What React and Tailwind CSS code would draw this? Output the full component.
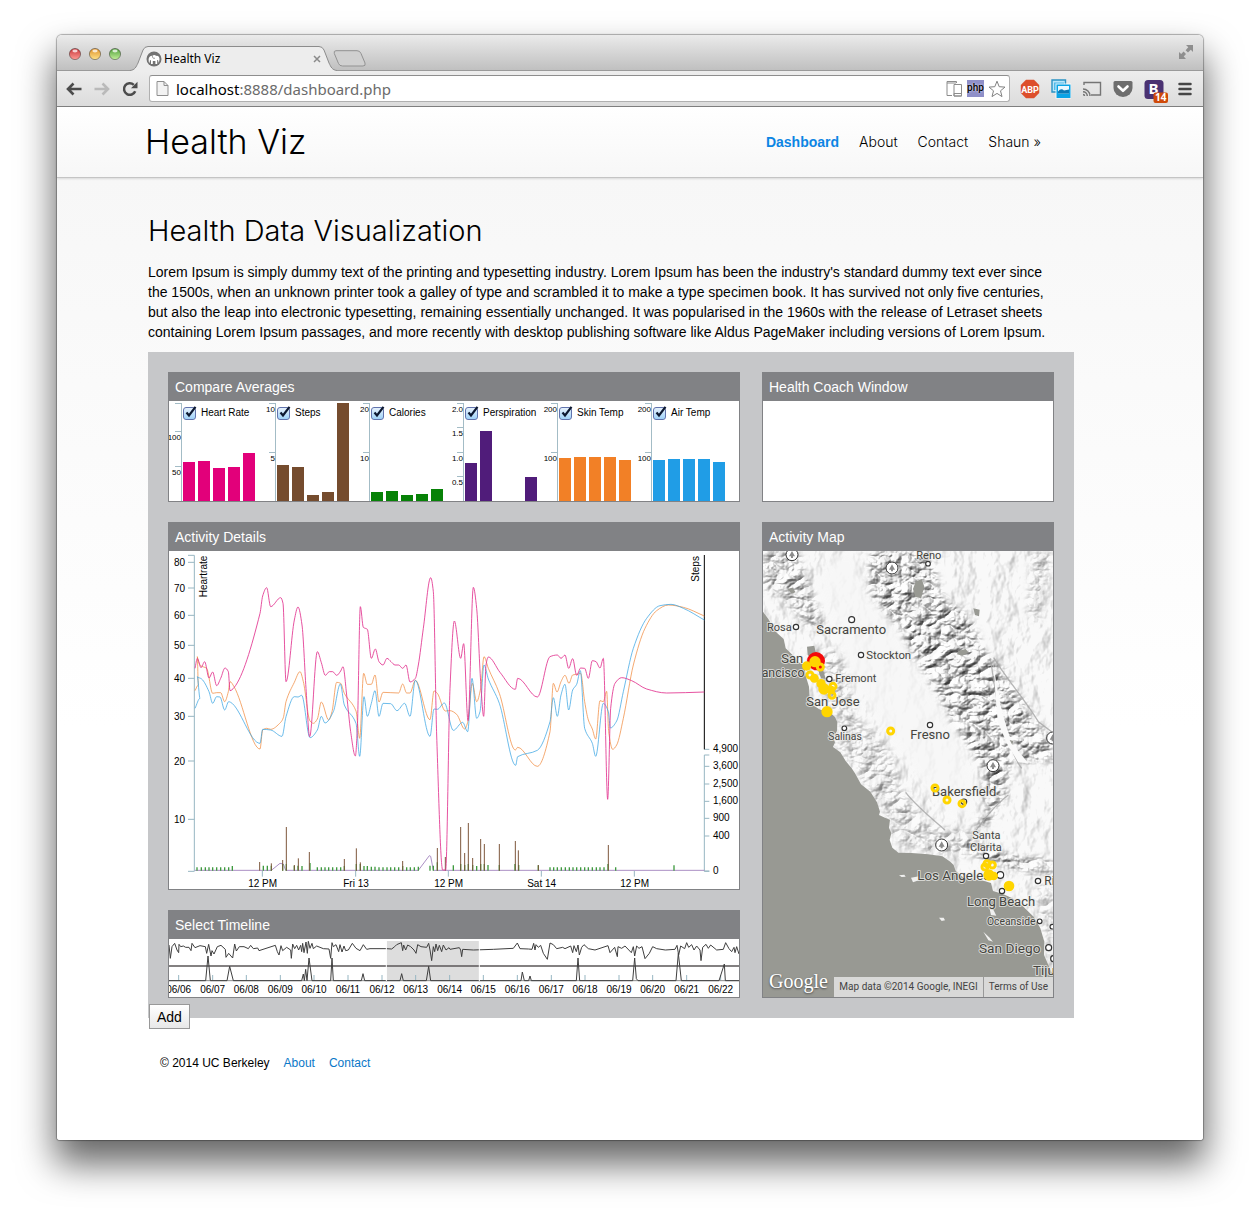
import React from "react";

/* ---------- helpers ---------- */

const toPoints = (flat) => {
  const out = [];
  for (let i = 0; i < flat.length; i += 2) out.push([flat[i], flat[i + 1]]);
  return out;
};

const polyline = (flat) => "M" + toPoints(flat).map((p) => p.join(",")).join("L");

/* Smooth curve that never overshoots its data points. */
function smooth(flat) {
  const p = toPoints(flat);
  const slope = p.slice(1).map((b, i) => (b[1] - p[i][1]) / (b[0] - p[i][0] || 1));
  const m = p.map((_, i) => {
    if (i === 0) return slope[0];
    if (i === p.length - 1) return slope[i - 1];
    const a = slope[i - 1];
    const b = slope[i];
    return a * b <= 0 ? 0 : (2 * a * b) / (a + b);
  });
  let d = `M${p[0][0]},${p[0][1]}`;
  for (let i = 1; i < p.length; i++) {
    const h = (p[i][0] - p[i - 1][0]) / 3;
    d += `C${p[i - 1][0] + h},${p[i - 1][1] + m[i - 1] * h} ${p[i][0] - h},${p[i][1] - m[i] * h} ${p[i][0]},${p[i][1]}`;
  }
  return d;
}

/* ---------- data ---------- */

const averages = [
  { name: "Heart Rate", color: "#e2007a", ticks: [[30, "100"], [65, "50"]], tops: [61, 60, 67, 66, 52] },
  { name: "Steps", color: "#754c2e", ticks: [[2, "10"], [51, "5"]], tops: [64, 66, 94, 91, 2] },
  { name: "Calories", color: "#078207", ticks: [[2, "20"], [51, "10"]], tops: [91, 90, 94, 93, 88] },
  { name: "Perspiration", color: "#501c7a", ticks: [[2, "2.0"], [26, "1.5"], [51, "1.0"], [75, "0.5"]], tops: [62, 30, 100, 100, 76] },
  { name: "Skin Temp", color: "#f28026", ticks: [[2, "200"], [51, "100"]], tops: [57, 56, 56, 56, 59] },
  { name: "Air Temp", color: "#209de6", ticks: [[2, "200"], [51, "100"]], tops: [59, 58, 58, 58, 61] },
];

const heart = [105,460,112,430,123,458,134,440,147,489,158,471,170,512,182,490,195,459,205,470,210,527,222,518,300,295,308,243,320,218,332,275,362,248,369,265,378,500,403,315,414,276,426,330,438,520,449,665,472,410,484,443,496,481,508,470,518,470,530,481,542,468,549,455,560,540,572,650,586,723,592,640,601,275,610,337,622,343,634,430,646,402,657,440,669,450,681,430,693,440,705,450,716,450,728,460,738,450,750,501,766,490,775,450,790,340,812,188,820,230,830,660,848,1065,857,1065,870,520,883,318,902,430,911,386,924,617,940,217,950,280,962,500,971,604,978,450,985,426,1020,472,1066,523,1073,490,1132,546,1170,425,1192,420,1203,430,1215,420,1226,460,1238,431,1250,481,1262,459,1274,460,1285,490,1297,437,1308,440,1320,459,1330,430,1343,853,1352,580,1365,505,1385,488,1415,497,1460,522,1520,534,1633,531];
const skin = [105,527,115,510,112,425,122,452,140,460,158,535,170,533,182,533,194,560,205,530,210,500,222,515,300,702,308,645,320,640,332,643,362,622,370,608,378,560,403,502,420,470,430,500,450,618,460,625,472,612,484,561,506,615,516,590,530,502,542,505,553,535,588,588,599,670,611,475,622,508,634,508,645,480,657,561,669,532,716,534,728,507,740,534,750,534,766,496,810,614,822,528,832,535,856,588,870,587,890,598,914,642,924,618,937,505,950,560,962,520,972,425,985,460,1018,535,1066,705,1073,697,1132,754,1170,650,1180,505,1191,531,1203,500,1215,481,1227,505,1238,480,1255,477,1262,475,1274,560,1285,615,1297,642,1307,672,1320,557,1330,560,1340,529,1346,650,1358,703,1370,690,1390,610,1420,450,1455,340,1490,287,1525,270,1570,277,1633,303];
const air = [105,580,120,550,112,485,125,492,147,530,158,565,170,545,180,546,194,585,206,560,212,562,300,685,308,643,332,645,366,664,378,605,403,545,414,546,425,541,450,668,472,645,484,604,495,624,520,590,541,507,553,570,588,625,599,724,612,545,622,604,634,565,645,527,657,604,669,565,692,566,711,587,734,565,750,604,766,496,810,664,822,582,832,583,853,564,880,646,908,622,923,650,936,490,950,610,960,590,972,450,985,492,1018,565,1067,751,1073,725,1132,706,1170,620,1180,548,1192,604,1203,540,1215,508,1226,585,1238,525,1250,508,1261,467,1274,640,1297,685,1307,724,1330,565,1345,590,1351,639,1370,618,1390,530,1420,400,1460,310,1500,272,1533,268,1570,280,1633,315];
const stepBars = [299,1041,334,1045,368,1035,379,936,403,1050,415,1030,448,1011,553,1032,589,1000,601,1042,728,1038,832,999,856,1026,902,936,914,1014,925,924,938,1029,962,972,973,987,1018,987,1066,978,1075,1006,1135,1050,1345,990];
const calorieBars = [111,1057,124,1057,136,1057,147,1057,158,1057,170,1057,182,1057,194,1057,206,1057,217,1053,310,1052,322,1052,334,1052,368,1047,379,1047,403,1052,414,1052,426,1053,450,1044,472,1057,484,1057,495,1057,506,1057,518,1057,530,1057,542,1057,553,1053,589,1047,601,1047,612,1053,622,1053,634,1055,645,1055,657,1057,669,1057,681,1057,692,1057,704,1057,716,1057,728,1053,740,1057,751,1057,763,1057,775,1055,810,1052,820,1052,832,1042,880,1051,902,1047,914,1050,925,1047,938,1050,950,1053,962,1047,973,1047,984,1050,1018,1050,1065,1047,1076,1050,1135,1051,1170,1057,1181,1057,1192,1057,1204,1057,1216,1057,1228,1057,1239,1057,1250,1057,1262,1057,1274,1057,1285,1057,1297,1057,1309,1057,1320,1057,1332,1057,1344,1047,1367,1057,1542,1051];
const leftTicks = [[142, "80"], [219, "70"], [301, "60"], [391, "50"], [490, "40"], [604, "30"], [738, "20"], [913, "10"]];
const rightTicks = [[703, "4,900"], [754, "3,600"], [807, "2,500"], [859, "1,600"], [910, "900"], [963, "400"], [1068, "0"]];
const timeTicks = [[307, "12 PM"], [587, "Fri 13"], [865, "12 PM"], [1144, "Sat 14"], [1423, "12 PM"]];

const wave = [87,135,91,175,96,140,104,130,111,150,116,158,117,133,122,140,130,138,137,142,147,142,153,152,156,130,165,143,180,137,196,140,200,160,206,133,213,168,216,152,222,162,232,140,243,136,256,148,258,172,266,160,278,174,284,132,289,153,298,140,312,140,325,146,332,136,340,146,353,144,357,152,406,136,412,155,417,165,423,137,428,152,440,142,452,150,454,175,458,132,464,146,470,136,476,150,482,136,485,155,488,130,492,158,498,126,502,160,505,124,510,145,516,130,520,146,530,138,550,146,567,147,572,175,576,128,580,140,588,134,596,155,600,134,606,156,612,138,617,152,625,150,637,130,648,145,660,152,670,134,680,148,690,146,740,146,755,147,764,140,770,134,784,128,788,152,791,135,797,150,803,135,812,140,822,150,828,160,833,134,843,140,860,142,866,130,870,150,875,182,880,140,884,155,888,132,893,152,898,136,905,155,910,135,918,150,927,143,930,148,958,143,962,150,965,170,968,148,1000,150,1060,148,1120,145,1132,129,1140,146,1165,147,1176,148,1181,130,1185,150,1188,134,1195,142,1202,136,1210,160,1222,178,1230,129,1240,134,1250,146,1268,142,1275,146,1292,138,1298,158,1302,137,1309,155,1314,135,1318,165,1325,142,1332,134,1345,146,1365,150,1404,137,1410,158,1424,142,1432,170,1434,140,1445,145,1455,138,1474,158,1480,140,1484,168,1490,138,1497,145,1506,140,1515,176,1528,160,1538,140,1550,146,1576,150,1605,148,1611,136,1616,165,1622,138,1634,146,1640,128,1646,142,1655,134,1662,150,1670,138,1680,150,1683,182,1688,142,1698,133,1705,145,1712,135,1730,150,1750,148,1757,128,1767,146,1775,155,1782,142,1785,158,1790,140,1797,162];
const spikes = [87,242,197,242,204,168,211,242,261,242,269,199,280,242,485,242,490,222,493,242,497,208,501,242,507,174,516,242,572,242,576,174,580,242,664,242,669,221,674,242,780,242,785,221,790,242,859,242,866,199,872,242,1143,242,1147,216,1153,242,1166,242,1170,228,1174,242,1309,242,1314,174,1319,242,1478,242,1484,174,1489,236,1494,242,1608,242,1615,160,1624,242,1737,242,1753,192,1756,242,1797,242];
const days = Array.from({ length: 17 }, (_, i) => [
  Math.round(116 + i * 101.6),
  "06/" + String(i + 6).padStart(2, "0"),
]);

/* ---------- browser frame ---------- */

function TrafficLight({ id, label, light, dark }) {
  return (
    <button type="button" aria-label={label} className="block size-3">
      <svg viewBox="0 0 12 12" className="block size-3 overflow-visible">
        <defs>
          <linearGradient id={id} x1="0" y1="0" x2="0" y2="1">
            <stop offset="0" stopColor={dark} />
            <stop offset="1" stopColor={light} />
          </linearGradient>
        </defs>
        <circle cx="6" cy="6" r="5.6" fill={`url(#${id})`} stroke="#0006" strokeWidth=".9" />
        <ellipse cx="6" cy="3" rx="2.6" ry="1.4" fill="#fff" opacity=".75" />
      </svg>
    </button>
  );
}

function TitleBar() {
  return (
    <div className="flex h-[36px] items-end rounded-t-[5px] border-b border-[#9a9a9a] bg-linear-to-b from-[#ebebeb] to-[#c0c0c0] pl-3">
      <div className="mb-2.5 flex gap-2">
        <TrafficLight id="l1" label="Close window" dark="#c8353a" light="#ff9c95" />
        <TrafficLight id="l2" label="Minimize" dark="#de9028" light="#ffe38a" />
        <TrafficLight id="l3" label="Zoom window" dark="#4f9e39" light="#c4f09b" />
      </div>
      <div className="relative z-10 -mb-px ml-[9px] flex h-[25px] w-[207px] items-center pr-4 pl-4">
        <svg viewBox="0 0 207 25" className="absolute inset-0 size-full">
          <path d="M0 24.500C5 24 6 21 8 17L13 4Q14.500 .5 18 .5H189Q192.500 .5 194 4L199 17C201 21 202 24 207 24.500V25H0Z" fill="#ededed" />
          <path d="M0 24.500C5 24 6 21 8 17L13 4Q14.500 .5 18 .5H189Q192.500 .5 194 4L199 17C201 21 202 24 207 24.500" fill="none" stroke="#8c8c8c" />
        </svg>
        <svg viewBox="0 0 16 16" className="relative size-4">
          <circle cx="8" cy="8" r="7.500" fill="#727272" />
          <path d="M2.600 8.500C2.600 6 4.400 4.600 6.200 4.700 7.500 3.800 9.200 4 10.300 4.900 12.400 4.600 13.600 6.200 13.500 8.500L12.800 12 12 9 11.200 9V13H9.400V10H6.800V13H5V9.500L4 9 3.600 12 2.800 11Z" fill="#fff" />
          <path d="M6.600 4.500C6 6.500 7.300 8 9 7.200" fill="none" stroke="#727272" strokeWidth=".7" />
        </svg>
        <span className="relative ml-0.5 flex-1 text-[12px] leading-4 text-black">Health Viz</span>
        <button type="button" aria-label="Close tab" className="relative">
          <svg viewBox="0 0 8 8" className="size-2">
            <path d="M1 1L7 7M7 1L1 7" stroke="#8a8a8a" strokeWidth="1.500" />
          </svg>
        </button>
      </div>
      <button type="button" aria-label="New tab" className="-ml-1 mb-[3px]">
        <svg viewBox="0 0 34 17" className="block h-[17px] w-[34px]">
          <path d="M3 .7H24Q27 .7 28 3.500L32 13Q33 16 30 16H9.500Q6.500 16 5.500 13.500L1.300 3.500Q.5 .7 3 .7Z" fill="#d0d0d0" stroke="#929292" />
        </svg>
      </button>
      <button type="button" aria-label="Full screen" className="mr-[9px] mb-2.5 ml-auto">
        <svg viewBox="0 0 16 16" className="block size-4">
          <path d="M8 1H15V8L12.800 5.800 10 8.600 7.600 6.200 10.300 3.300ZM1 8L3.200 10 5.600 7.600 8 10 5.700 12.600 8 15H1Z" fill="#8e8e8e" />
        </svg>
      </button>
    </div>
  );
}

function Toolbar() {
  return (
    <div className="flex h-9 items-center border-b border-[#808080] bg-linear-to-b from-[#ededed] to-[#dcdcdc] pr-[11px] pl-[9px]">
      <button type="button" aria-label="Back">
        <svg viewBox="0 0 16 14" className="block h-3.5 w-4">
          <path d="M15.500 7H3M7.500 1.500L2 7L7.500 12.500" fill="none" stroke="#4c4c4c" strokeWidth="2.600" />
        </svg>
      </button>
      <button type="button" aria-label="Forward" className="ml-3">
        <svg viewBox="0 0 16 14" className="block h-3.5 w-4">
          <path d="M.5 7H13M8.500 1.500L14 7L8.500 12.500" fill="none" stroke="#bababa" strokeWidth="2.600" />
        </svg>
      </button>
      <button type="button" aria-label="Reload" className="ml-3">
        <svg viewBox="0 0 16 16" className="block size-4">
          <path d="M13.200 10.200A5.800 5.800 0 1 1 11.800 3.800" fill="none" stroke="#4c4c4c" strokeWidth="2.500" />
          <path d="M15.500 .8V7.300H9Z" fill="#4c4c4c" />
        </svg>
      </button>
      <div className="ml-[11px] flex h-[27px] flex-1 items-center rounded-[3px] border border-[#b0b0b0] border-t-[#8e8e8e] bg-white pr-[3px] pl-1.5">
        <svg viewBox="0 0 13 15" className="h-[15px] w-[13px]">
          <path d="M1 .5H8L12 4.500V14.500H1Z" fill="#f3f3f3" stroke="#8f8f8f" />
          <path d="M8 .5V4.500H12" fill="none" stroke="#8f8f8f" />
        </svg>
        <div className="ml-[7px] flex-1 font-['Noto_Sans','Open_Sans',sans-serif] text-[15px] leading-5 text-[#6b6b6b]">
          <span className="text-black">localhost</span>:8888/dashboard.php
        </div>
        <svg viewBox="0 0 17 17" className="size-[17px]">
          <path d="M6 15.500H1V1.500H10.500V3M1 3H10" fill="none" stroke="#8c8c8c" />
          <path d="M8 4.500H15.500V16H8ZM8 13.500H15.500V16H8Z" fill="#fff" stroke="#8c8c8c" />
        </svg>
        <span className="ml-1 h-[17px] w-[17px] bg-[#8f8fc8] text-center font-['Roboto',sans-serif] text-[10px] leading-4 font-medium text-black [text-shadow:0_0_2px_#fff]">php</span>
        <button type="button" aria-label="Bookmark this page" className="ml-1">
          <svg viewBox="0 0 18 18" className="block size-[18px]">
            <path d="M9 1.200L11.200 6.700L17 7.100L12.500 10.800L14 16.600L9 13.400L4 16.600L5.500 10.800L1 7.100L6.800 6.700Z" fill="#fff" stroke="#828282" />
          </svg>
        </button>
      </div>
      <div className="ml-2.5 flex items-center gap-[11px]">
        <button type="button" aria-label="Adblock Plus">
          <svg viewBox="0 0 20 20" className="block size-5">
            <path d="M6 .8H14L19.200 6V14L14 19.200H6L.8 14V6Z" fill="#dd4f2c" />
            <text x="10" y="13.500" fontSize="9" fontWeight="700" fontFamily="Roboto, sans-serif" textAnchor="middle" fill="#fff">ABP</text>
          </svg>
        </button>
        <button type="button" aria-label="Image gallery">
          <svg viewBox="0 0 20 20" className="block size-5">
            <path d="M1 1H14.500V13H1Z" fill="#b9e6fa" stroke="#2a92c4" strokeWidth="1.400" />
            <path d="M3 3.500H13V11H3Z" fill="#4db9ea" />
            <path d="M4.500 4.500H20V19.500H4.500Z" fill="#fff" opacity=".8" />
            <path d="M5.500 5.500H19.500V19H5.500Z" fill="#0aa4e6" />
            <path d="M7 7H18V14.500H7Z" fill="#e9f8ff" />
            <path d="M7 12.500Q10 8.500 13 11.500L18 10.500V14.500H7Z" fill="#0b79b5" />
          </svg>
        </button>
        <button type="button" aria-label="Cast">
          <svg viewBox="0 0 20 16" className="block h-4 w-5">
            <path d="M2 4V1.500H18.500V14H9" fill="none" stroke="#757575" strokeWidth="1.400" />
            <path d="M1 13.500A1.500 1.500 0 0 1 2.500 15M1 10.700A4.300 4.300 0 0 1 5.300 15M1 8A7 7 0 0 1 8 15" fill="none" stroke="#757575" strokeWidth="1.500" />
          </svg>
        </button>
        <button type="button" aria-label="Save to Pocket">
          <svg viewBox="0 0 20 18" className="block h-[18px] w-5">
            <path d="M2 1H18Q19.500 1 19.500 2.500V8A9.500 9 0 0 1 .5 8V2.500Q.5 1 2 1Z" fill="#6e6e6e" />
            <path d="M5.500 6.500L10 10.800L14.500 6.500" fill="none" stroke="#fff" strokeWidth="2.600" strokeLinecap="round" strokeLinejoin="round" />
          </svg>
        </button>
        <button type="button" aria-label="Bootstrap, 14">
          <svg viewBox="0 0 24 24" className="-mr-1 -mb-1 block size-6">
            <rect x=".5" y="1" width="19" height="19" rx="3.500" fill="#4a3272" />
            <text x="9.500" y="15" fontSize="15" fontWeight="700" textAnchor="middle" fill="#fff">B</text>
            <rect x="9.500" y="13.500" width="14.500" height="10.500" rx="2" fill="#cf4a0a" />
            <text x="16.700" y="22.400" fontSize="10" fontWeight="700" textAnchor="middle" fill="#fff">14</text>
          </svg>
        </button>
        <button type="button" aria-label="Menu" className="ml-[3px]">
          <svg viewBox="0 0 14 14" className="block size-3.5">
            <path d="M1.500 2H12.500M1.500 7H12.500M1.500 12H12.500" stroke="#454545" strokeWidth="2.500" strokeLinecap="round" />
          </svg>
        </button>
      </div>
    </div>
  );
}

/* ---------- dashboard ---------- */

function Panel({ title, children, className = "" }) {
  return (
    <section className={"flex flex-col overflow-hidden border border-[#818285] bg-white " + className}>
      <h2 className="h-7 shrink-0 bg-[#818285] pl-1.5 text-[14px] leading-7 text-white">{title}</h2>
      {children}
    </section>
  );
}

function AverageChart({ item }) {
  return (
    <div className="relative">
      <svg viewBox="0 0 94 100" className="block w-full overflow-visible">
        <path d="M12.500 2V100M6 2.500H12.500" stroke="#a3bcc6" fill="none" />
        {item.ticks.map(([y, label]) => (
          <g key={label}>
            <path d={`M6 ${y + 0.5}H12.500`} stroke="#a3bcc6" />
            <text x="12" y={y + 9} fontSize="8" textAnchor="end" fill="#000">{label}</text>
          </g>
        ))}
        {item.tops.map((top, i) => (
          <rect key={i} x={14 + i * 15} y={top} width="12" height={100 - top} fill={item.color} />
        ))}
      </svg>
      <label className="absolute top-[5px] left-[14px] flex items-center text-[10px] leading-[14px] whitespace-nowrap">
        <span className="relative block size-[13px]">
          <input
            type="checkbox"
            defaultChecked
            className="peer block size-[13px] appearance-none rounded-[3px] border border-[#6173ad] bg-linear-to-b from-[#e6f1fc] to-[#9fd2f7]"
          />
          <svg viewBox="0 0 14 14" className="pointer-events-none absolute -top-px left-0 hidden size-3.5 overflow-visible peer-checked:block">
            <path d="M3.500 6.500L6 9.500L12.500 .8" fill="none" stroke="#0c1830" strokeWidth="2.200" />
          </svg>
        </span>
        <span className="ml-[5px]">{item.name}</span>
      </label>
    </div>
  );
}

function ActivityDetails() {
  return (
    <svg viewBox="27 108 1710 1014" className="block w-full" fontSize="30">
      <g fill="none" stroke="#97b6c2" strokeWidth="3">
        <path d="M84 121H103V1069H84" />
        <path d="M1648 720H1633V1069H1648" />
        {leftTicks.map(([y]) => <path key={y} d={`M84 ${y}H103`} />)}
        {rightTicks.map(([y]) => <path key={y} d={`M1633 ${y}H1648`} />)}
        {timeTicks.map(([x]) => <path key={x} d={`M${x} 1068V1085`} />)}
      </g>
      <path d="M1633 120V703" stroke="#000" strokeWidth="3" />
      <g fill="#000">
        {leftTicks.map(([y, t]) => <text key={y} x="75" y={y + 11} textAnchor="end">{t}</text>)}
        {rightTicks.map(([y, t]) => <text key={y} x="1659" y={y + 9}>{t}</text>)}
        {timeTicks.map(([x, t]) => <text key={x} x={x + 1} y="1116" textAnchor="middle">{t}</text>)}
        <text transform="translate(141 247) rotate(-90)">Heartrate</text>
        <text transform="translate(1617 200) rotate(-90)">Steps</text>
      </g>
      <path d="M105 1066H334L360 1045L370 1047L377 1066H775L808 1022L812 1024L820 1066H1633" fill="none" stroke="#9a78b8" strokeWidth="2.500" />
      <g stroke="#3f9a3f" strokeWidth="4">
        {toPoints(calorieBars).map(([x, y]) => <path key={x} d={`M${x} ${y}V1067`} />)}
      </g>
      <g stroke="#7d573c" strokeWidth="3">
        {toPoints(stepBars).map(([x, y]) => <path key={x} d={`M${x} ${y}V1067`} />)}
      </g>
      <g fill="none" strokeWidth="3" strokeLinejoin="round">
        <path d={smooth(skin)} stroke="#f0883a" opacity=".72" />
        <path d={smooth(air)} stroke="#34a2e2" opacity=".72" />
        <path d={smooth(heart)} stroke="#e2348f" opacity=".85" />
      </g>
    </svg>
  );
}

function Timeline() {
  return (
    <svg viewBox="87 117 1710 174" className="block w-full" fontSize="30">
      <rect x="740" y="123" width="277" height="120" fill="#dddddd" />
      {days.map(([x, t]) => (
        <g key={t}>
          <path d={`M${x} 225V242`} stroke="#97b6c2" strokeWidth="3" />
          <text x={x} y="278" textAnchor="middle">{t}</text>
        </g>
      ))}
      <path d="M87 198H1797" stroke="#5a5657" strokeWidth="5" />
      <g fill="none" stroke="#3f3f3f" strokeWidth="3" strokeLinejoin="round">
        <path d="M87 242H1797" stroke="#8c8c8c" />
        <path d={polyline(wave)} />
        <path d={polyline(spikes)} />
      </g>
      <path d="M739 123V243M1018 123V243" stroke="#fff" strokeWidth="3" />
    </svg>
  );
}

const places = [
  ["Reno", 484, 131, 33], ["Rosa", 36, 347, 33], ["Sacramento", 184, 358, 39], ["Stockton", 334, 431, 34],
  ["San", 79, 444, 39], ["ancisco", 20, 486, 37], ["Fremont", 241, 502, 33], ["San Jose", 154, 574, 39],
  ["Salinas", 220, 676, 31], ["Fresno", 466, 672, 39], ["Bakersfield", 531, 843, 39], ["Santa", 652, 972, 33],
  ["Clarita", 645, 1008, 33], ["Los Angeles", 487, 1095, 40], ["Long Beach", 636, 1172, 39],
  ["Oceanside", 696, 1231, 31], ["San Diego", 672, 1315, 41], ["Tijuana", 834, 1379, 40], ["Riverside", 868, 1110, 36],
];
const towns = [
  [519, 146, 7], [290, 314, 9], [123, 336, 8], [318, 420, 8], [223, 492, 8], [268, 640, 7], [525, 630, 8], [627, 860, 8],
  [693, 1023, 8], [736, 1080, 10], [741, 1128, 8], [849, 1098, 8], [854, 1219, 7], [892, 1235, 7], [881, 1298, 9], [896, 1331, 9],
];
const parks = [[111, 119], [411, 159], [714, 752], [560, 990], [893, 669]];
const rings = [[165, 480], [178, 490], [234, 514], [231, 541], [196, 456], [407, 648], [540, 819], [576, 855], [621, 866], [696, 1046], [712, 1050], [690, 1056]];
const dots = [[155, 453, 14], [180, 440, 17], [198, 506, 14], [207, 522, 17], [228, 524, 12], [216, 590, 17], [176, 489, 9], [702, 1080, 17], [716, 1083, 13], [762, 1113, 16]];

const coast = "M24 290L40 312 62 350 86 372 92 400 115 422 128 440 148 450 152 482 162 515 163 548 176 572 196 584 222 590 240 606 247 622 246 648 234 668 240 682 234 696 256 712 272 738 290 760 300 775 318 808 346 830 366 862 375 890 372 900 390 908 405 914 402 938 409 955 404 975 412 998 430 1013 470 1014 520 1018 562 1024 586 1040 596 1050 602 1068 628 1090 680 1096 708 1104 714 1128 742 1136 772 1150 802 1172 836 1205 856 1240 868 1280 867 1320 880 1350 894 1382";

function TerrainMap() {
  return (
    <svg viewBox="24 108 870 1338" className="block w-full" fontFamily="Roboto, sans-serif">
      <defs>
        <filter id="ridges" x="0" y="0" width="100%" height="100%" colorInterpolationFilters="sRGB">
          <feTurbulence type="turbulence" baseFrequency="0.017 0.024" numOctaves="4" seed="11" />
          <feDiffuseLighting surfaceScale="15" diffuseConstant="1.150" lightingColor="#ffffff">
            <feDistantLight azimuth="225" elevation="50" />
          </feDiffuseLighting>
        </filter>
        <filter id="hills" x="0" y="0" width="100%" height="100%" colorInterpolationFilters="sRGB">
          <feTurbulence type="fractalNoise" baseFrequency="0.016 0.012" numOctaves="4" seed="4" />
          <feDiffuseLighting surfaceScale="12" diffuseConstant="1.250" lightingColor="#ffffff">
            <feDistantLight azimuth="200" elevation="54" />
          </feDiffuseLighting>
        </filter>
        <filter id="soften" x="-20%" y="-20%" width="140%" height="140%">
          <feGaussianBlur stdDeviation="13" />
        </filter>
        <mask id="highland" maskUnits="userSpaceOnUse" x="24" y="108" width="870" height="1338">
          <g fill="#fff" filter="url(#soften)">
            <path d="M350 108H520L560 250 640 300 700 440 740 600 770 740 740 830 690 880 690 760 600 640 560 560 480 430 420 330 340 240Z" />
            <path d="M24 108H125L190 290 210 350 150 330 90 250 24 220Z" opacity=".8" />
            <path d="M165 420L260 400 300 600 400 700 440 820 520 930 640 950 660 1020 560 1020 430 985 390 890 300 760 240 690 250 620Z" opacity=".5" />
            <path d="M690 430L730 440 800 560 894 680 894 740 790 740 740 620Z" opacity=".9" />
            <path d="M830 108L894 108 850 330 820 300Z" opacity=".5" />
            <path d="M620 960L760 1020 894 1040 894 1075 760 1060 640 1010Z" />
            <path d="M640 960L700 860 740 800 760 830 700 930Z" opacity=".7" />
            <path d="M840 1100L894 1120V1380L870 1260Z" opacity=".5" />
          </g>
        </mask>
      </defs>
      <rect x="24" y="108" width="870" height="1338" fill="#f5f5f5" />
      <rect x="24" y="108" width="870" height="1338" filter="url(#hills)" opacity=".4" />
      <g mask="url(#highland)">
        <rect x="24" y="108" width="870" height="1338" filter="url(#ridges)" opacity=".75" />
      </g>
      <path d="M190 200L230 120 300 108 340 240 430 350 480 450 560 580 640 720 670 850 620 900 530 850 440 720 370 620 290 500 250 380Z" fill="#f7f7f7" opacity=".8" filter="url(#soften)" />
      <g fill="none" stroke="#a6a6a6" strokeWidth="4" opacity=".8">
        <path d="M706 430C720 520 730 600 752 650S770 720 800 760" />
        <path d="M716 428C760 500 800 540 850 620L890 650" />
        <path d="M452 832C480 870 530 910 570 945" />
        <path d="M660 950C690 910 720 870 760 840" />
      </g>
      <path d="M714 440C728 540 745 620 775 690L820 745 790 742 758 690 728 620Z" fill="#fafafa" />
      <g fill="#989993">
        <path d={coast + "V1446H24Z"} />
        <path d="M482 200L500 192 508 215 498 250 480 245 474 222ZM655 280L674 284 672 304 660 300ZM610 408L632 402 640 412 622 422 606 418ZM98 222L112 218 122 232 110 236ZM156 395L178 392 182 412 206 470 212 492 198 490 180 440 158 420ZM764 675L775 678 772 690Z" />
      </g>
      <g fill="#f0f0ef">
        <path d="M432 1081L448 1079 452 1085 440 1086ZM468 1088L492 1084 496 1094 474 1102ZM552 1208L566 1208 570 1216 560 1218ZM704 1182L716 1186 724 1202 708 1200ZM685 1250L704 1268 714 1280 700 1276Z" />
      </g>
      {parks.map(([x, y]) => (
        <g key={x}>
          <circle cx={x} cy={y} r="18" fill="#fff" stroke="#333" strokeWidth="3" />
          <path d={`M${x} ${y - 11}L${x + 9} ${y + 5}H${x + 3}V${y + 10}H${x - 3}V${y + 5}H${x - 9}Z`} fill="#8c8c8c" />
        </g>
      ))}
      {towns.map(([x, y, r]) => (
        <circle key={x} cx={x} cy={y} r={r} fill="#fff" stroke="#333" strokeWidth="3.500" />
      ))}
      <g fill="#45453f" stroke="#f2f2f0" strokeWidth="6" strokeLinejoin="round" strokeOpacity=".7" paintOrder="stroke">
        {places.map(([name, x, y, size]) => (
          <text key={name} x={x} y={y} fontSize={size}>{name}</text>
        ))}
      </g>
      <circle cx="183" cy="438" r="27" fill="#f40a0a" />
      <path d="M170 458L205 450 206 466 178 466Z" fill="#f40a0a" />
      <g fill="#ffd500">
        {dots.map(([x, y, r]) => <circle key={x + "-" + y} cx={x} cy={y} r={r} />)}
      </g>
      <g fill="none" stroke="#ffd500" strokeWidth="9">
        {rings.map(([x, y]) => <circle key={x + "-" + y} cx={x} cy={y} r="9" />)}
      </g>
    </svg>
  );
}

export default function App() {
  return (
    <div className="bg-white px-[57px] pt-[35px] pb-[79px] font-['Liberation_Sans',Arial,sans-serif] text-black">
      <div className="rounded-t-[5px] rounded-b-[3px] shadow-[0_0_1px_1px_rgba(0,0,0,0.3),0_22px_36px_2px_rgba(0,0,0,0.6)]">
        <div className="font-['Noto_Sans','Open_Sans',sans-serif]">
          <TitleBar />
          <Toolbar />
        </div>
        <div className="rounded-b-[3px] bg-linear-to-b from-[#f6f6f6] to-white to-60% pb-[67px]">
          <header className="border-b border-[#c4c4c4] bg-linear-to-b from-white to-[#f7f7f7] shadow-[0_1px_2px_rgba(0,0,0,0.12)]">
            <div className="mx-auto flex h-[70px] max-w-[970px] items-center justify-between">
              <h1 className="font-['Inter','Liberation_Sans',sans-serif] text-[34px] leading-10 font-light">Health Viz</h1>
              <nav className="mr-[74px] flex gap-5 font-['Inter','Liberation_Sans',sans-serif] text-[14px] leading-5 font-light">
                <a href="#dashboard" className="font-['Liberation_Sans',Arial,sans-serif] font-bold text-[#0c85e4]">Dashboard</a>
                <a href="#about">About</a>
                <a href="#contact">Contact</a>
                <a href="#shaun">Shaun »</a>
              </nav>
            </div>
          </header>
          <main className="mx-auto max-w-[964px] pt-8 pr-[38px]">
            <h1 className="font-['Inter','Liberation_Sans',sans-serif] text-[29px] leading-[42px] font-light">Health Data Visualization</h1>
            <p className="mt-2.5 -mr-2 text-[14px] leading-5">
              Lorem Ipsum is simply dummy text of the printing and typesetting industry. Lorem Ipsum has been the industry's standard dummy text ever since<br />
              the 1500s, when an unknown printer took a galley of type and scrambled it to make a type specimen book. It has survived not only five centuries,<br />
              but also the leap into electronic typesetting, remaining essentially unchanged. It was popularised in the 1960s with the release of Letraset sheets<br />
              containing Lorem Ipsum passages, and more recently with desktop publishing software like Aldus PageMaker including versions of Lorem Ipsum.
            </p>
            <div className="mt-2.5 grid grid-cols-[572fr_292fr] gap-[22px] bg-[#c6c7c9] p-5">
              <div className="flex flex-col gap-5">
                <Panel title="Compare Averages">
                  <div className="grid grid-cols-6 pr-1.5">
                    {averages.map((item) => <AverageChart key={item.name} item={item} />)}
                  </div>
                </Panel>
                <Panel title="Activity Details"><ActivityDetails /></Panel>
                <Panel title="Select Timeline"><Timeline /></Panel>
              </div>
              <div className="flex flex-col gap-5">
                <Panel title="Health Coach Window" className="h-[130px]" />
                <Panel title="Activity Map" className="flex-1">
                  <div className="relative">
                    <TerrainMap />
                    <div className="absolute right-0 bottom-0 left-0 flex items-end justify-between pl-1.5 font-['Roboto',sans-serif] text-[10px] leading-5 text-[#444]">
                      <span className="font-['Liberation_Serif',serif] text-[20px] leading-8 text-white [text-shadow:0_1px_2px_#444]">Google</span>
                      <div className="flex bg-[#d9d9d8]">
                        <span className="px-[5px]">Map data ©2014 Google, INEGI</span>
                        <a href="#terms" className="border-l border-[#999] px-[5px]">Terms of Use</a>
                      </div>
                    </div>
                  </div>
                </Panel>
              </div>
            </div>
            <button type="button" className="relative -mt-3.5 ml-px block h-[25px] border border-[#989898] bg-linear-to-b from-white to-[#e8e8e8] px-[7px] text-[14px] leading-5">Add</button>
            <footer className="mt-6 flex gap-[14px] pl-3 text-[12px] leading-5">
              <span>© 2014 UC Berkeley</span>
              <a href="#about-us" className="text-[#0a78c8]">About</a>
              <a href="#contact-us" className="text-[#0a78c8]">Contact</a>
            </footer>
          </main>
        </div>
      </div>
    </div>
  );
}
